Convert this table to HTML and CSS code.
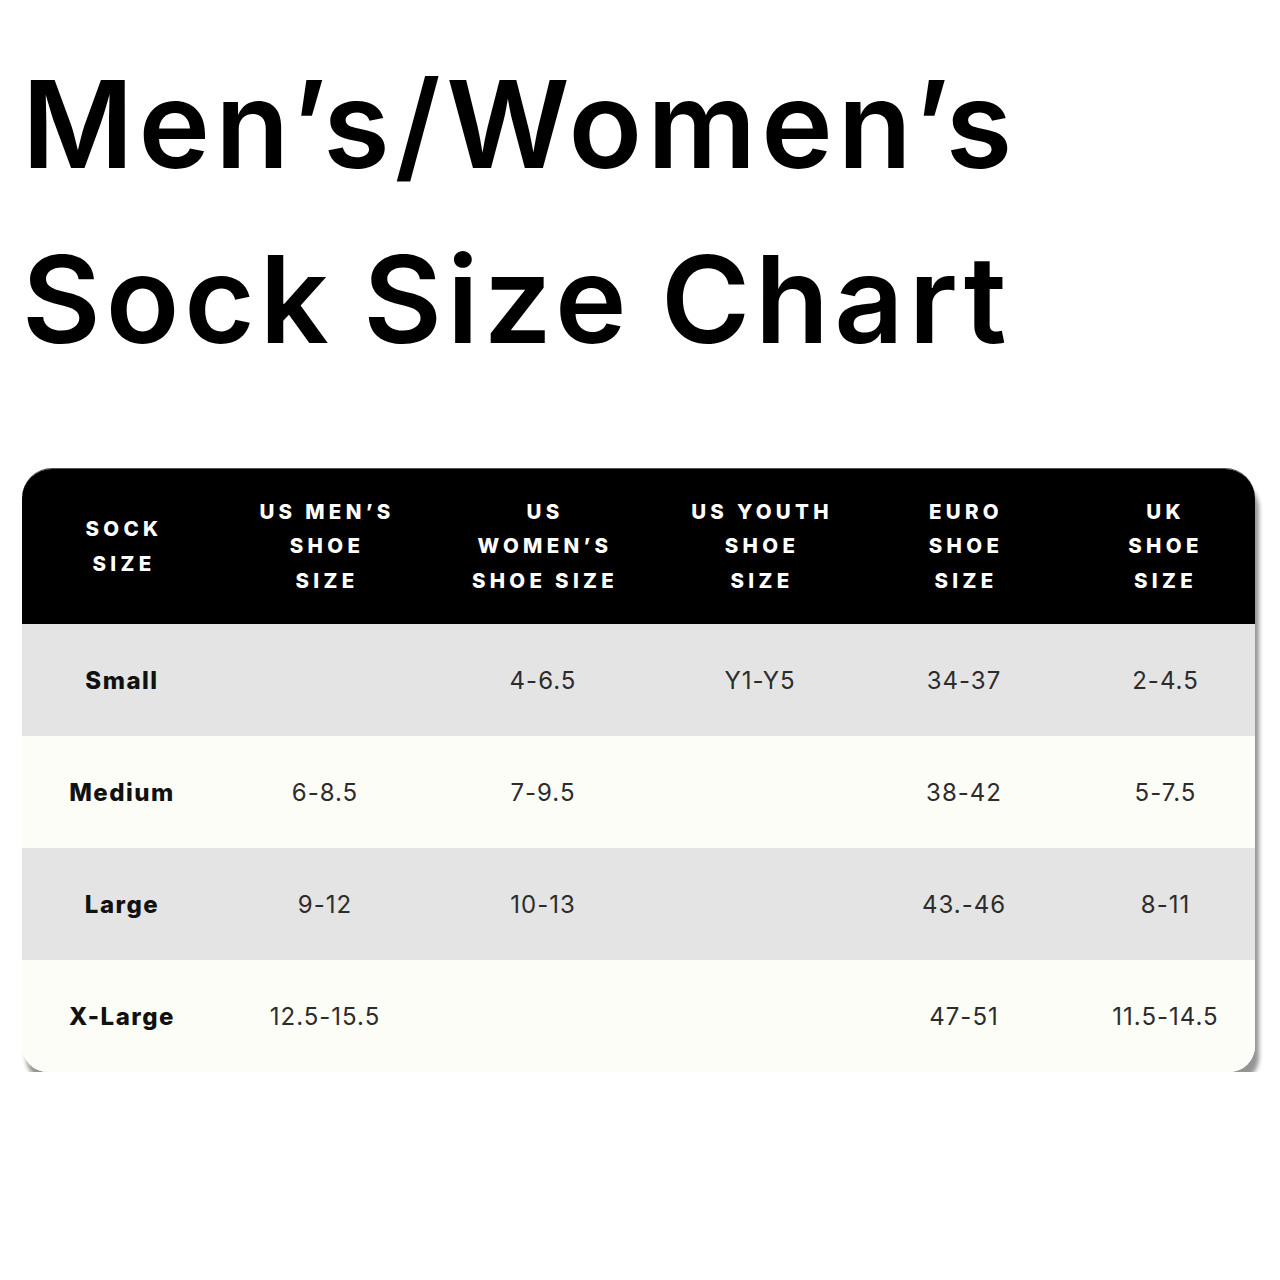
FILE: index.html
```html
<!DOCTYPE html>
<html>
<head>
<meta charset="utf-8">
<link rel="stylesheet" href="styles.css">
</head>
<body>
<h1 class="title"><span class="line">Men’s/Women’s</span><span class="line">Sock Size Chart</span></h1>
<div class="chart">
  <div class="row head">
    <div class="cell">SOCK<br>SIZE</div>
    <div class="cell">US MEN’S<br>SHOE<br>SIZE</div>
    <div class="cell">US<br>WOMEN’S<br>SHOE SIZE</div>
    <div class="cell">US YOUTH<br>SHOE<br>SIZE</div>
    <div class="cell">EURO<br>SHOE<br>SIZE</div>
    <div class="cell">UK<br>SHOE<br>SIZE</div>
  </div>
  <div class="row grey">
    <div class="cell label">Small</div>
    <div class="cell"></div>
    <div class="cell">4-6.5</div>
    <div class="cell">Y1-Y5</div>
    <div class="cell">34-37</div>
    <div class="cell">2-4.5</div>
  </div>
  <div class="row cream">
    <div class="cell label">Medium</div>
    <div class="cell">6-8.5</div>
    <div class="cell">7-9.5</div>
    <div class="cell"></div>
    <div class="cell">38-42</div>
    <div class="cell">5-7.5</div>
  </div>
  <div class="row grey">
    <div class="cell label">Large</div>
    <div class="cell">9-12</div>
    <div class="cell">10-13</div>
    <div class="cell"></div>
    <div class="cell">43.-46</div>
    <div class="cell">8-11</div>
  </div>
  <div class="row cream">
    <div class="cell label">X-Large</div>
    <div class="cell">12.5-15.5</div>
    <div class="cell"></div>
    <div class="cell"></div>
    <div class="cell">47-51</div>
    <div class="cell">11.5-14.5</div>
  </div>
</div>
</body>
</html>
```

FILE: styles.css
```css
html, body {
  margin: 0;
  padding: 0;
  background: #ffffff;
}

body {
  font-family: Inter, "Noto Sans", sans-serif;
  color: #000;
}

.title {
  margin: 0;
  padding: 37px 0 0 22px;
  font-size: 121px;
  font-weight: 600;
  letter-spacing: 5px;
  word-spacing: -6px;
  line-height: 175px;
}

.title .line {
  display: block;
}

.chart {
  margin: 81px 0 0 22px;
  width: 1233px;
  border-radius: 30px 30px 26px 26px;
  overflow: hidden;
  box-shadow: 4px 11px 4px rgba(0, 0, 0, 0.42);
  border-top: 1px solid #555;
}

.row {
  display: grid;
  grid-template-columns: 200px 206px 230px 204px 204px 189px;
  align-items: center;
}

.cell {
  text-align: center;
}

.row .cell:last-child {
  padding-left: 10px;
}

.head {
  background: #000;
  color: #fff;
  height: 155px;
  font-size: 20.5px;
  font-weight: 800;
  letter-spacing: 4.3px;
  line-height: 34.5px;
}

.head .cell {
  padding-left: 4px;
}

.grey,
.cream {
  height: 112px;
  font-size: 24px;
  letter-spacing: 1px;
  color: #2c2c2c;
}

.grey {
  background: #e4e4e4;
}

.cream {
  background: #fdfdf7;
}

.label {
  font-weight: 800;
  letter-spacing: 1.5px;
  color: #111;
}
```
